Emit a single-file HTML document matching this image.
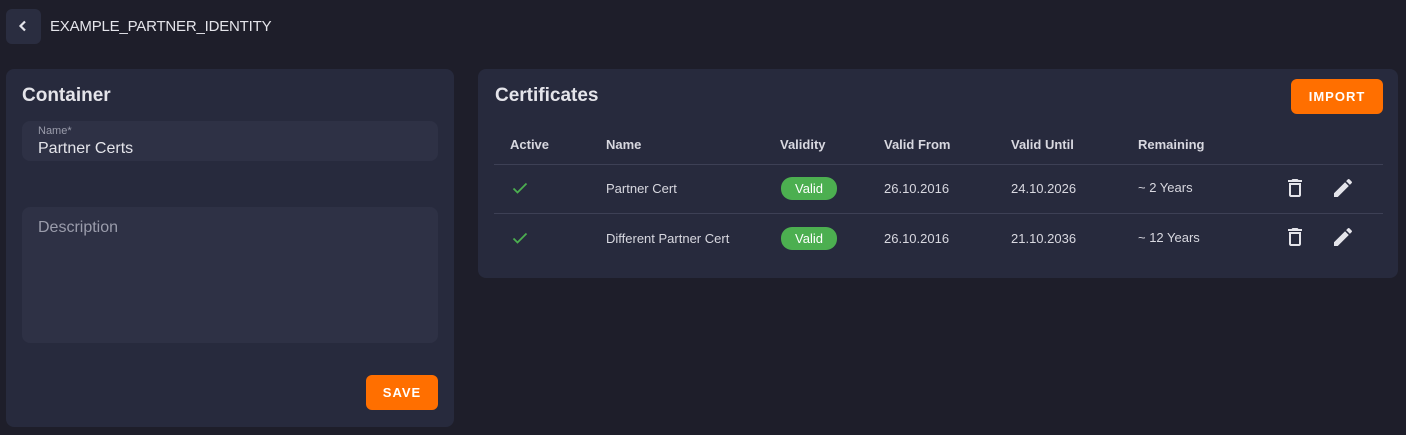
<!DOCTYPE html>
<html><head><style>
*{box-sizing:border-box;margin:0;padding:0}
body{width:1406px;height:435px;background:#1e1e2a;font-family:"Liberation Sans",sans-serif;color:#e4e4ea;position:relative;overflow:hidden}
.abs{position:absolute}
.card{background:#272a3d;border-radius:8px}
.btn{background:#ff6f00;color:#fff;font-weight:bold;font-size:13px;letter-spacing:1px;border-radius:6px;display:flex;align-items:center;justify-content:center}
.th{font-size:13px;font-weight:bold;color:#d8d8e0;top:137px}
.td{font-size:13px;color:#d8d8e0}
.badge{background:#4caf50;color:#fff;font-size:13px;border-radius:11px;width:56px;height:23px;display:flex;align-items:center;justify-content:center}
.line{height:1px;background:#3d4055;left:494px;width:889px}
</style></head><body>
<div class="abs" style="left:6px;top:9px;width:35px;height:35px;background:#2a2d40;border-radius:6px"></div>
<svg class="abs" style="left:16px;top:19px" width="14" height="14" viewBox="0 0 14 14"><path d="M9 2.5L4.5 7L9 11.5" stroke="#e4e4ea" stroke-width="2.2" fill="none"/></svg>
<div class="abs" style="left:50px;top:18px;font-size:15px;letter-spacing:-0.2px">EXAMPLE_PARTNER_IDENTITY</div>

<div class="abs card" style="left:6px;top:69px;width:448px;height:358px"></div>
<div class="abs" style="left:22px;top:85px;font-size:19px;font-weight:bold">Container</div>
<div class="abs" style="left:22px;top:121px;width:416px;height:40px;background:#2e3145;border-radius:8px"></div>
<div class="abs" style="left:38px;top:125px;font-size:11px;color:#9a9cab">Name*</div>
<div class="abs" style="left:38px;top:140px;font-size:16px">Partner Certs</div>
<div class="abs" style="left:22px;top:207px;width:416px;height:136px;background:#2e3145;border-radius:8px"></div>
<div class="abs" style="left:38px;top:219px;font-size:16px;color:#9a9cab">Description</div>
<div class="abs btn" style="left:366px;top:375px;width:72px;height:35px">SAVE</div>

<div class="abs card" style="left:478px;top:69px;width:920px;height:209px"></div>
<div class="abs" style="left:495px;top:85px;font-size:19px;font-weight:bold">Certificates</div>
<div class="abs btn" style="left:1291px;top:79px;width:92px;height:35px">IMPORT</div>
<div class="abs th" style="left:510px">Active</div>
<div class="abs th" style="left:606px">Name</div>
<div class="abs th" style="left:780px">Validity</div>
<div class="abs th" style="left:884px">Valid From</div>
<div class="abs th" style="left:1011px">Valid Until</div>
<div class="abs th" style="left:1138px">Remaining</div>
<div class="abs line" style="top:164px"></div>
<div class="abs line" style="top:213px"></div>

<svg class="abs" style="left:512px;top:181px" width="16" height="14"><path d="M1.5 7.5L5.5 11.5L14.5 2.5" stroke="#4caf50" stroke-width="1.8" fill="none"/></svg>
<div class="abs td" style="left:606px;top:181px">Partner Cert</div>
<div class="abs badge" style="left:781px;top:177px">Valid</div>
<div class="abs td" style="left:884px;top:181px">26.10.2016</div>
<div class="abs td" style="left:1011px;top:181px">24.10.2026</div>
<div class="abs td" style="left:1138px;top:180px">~ 2 Years</div>

<svg class="abs" style="left:1531px;top:231px" width="1" height="1"></svg>
<svg class="abs" style="left:512px;top:231px" width="16" height="14"><path d="M1.5 7.5L5.5 11.5L14.5 2.5" stroke="#4caf50" stroke-width="1.8" fill="none"/></svg>
<div class="abs td" style="left:606px;top:231px">Different Partner Cert</div>
<div class="abs badge" style="left:781px;top:227px">Valid</div>
<div class="abs td" style="left:884px;top:231px">26.10.2016</div>
<div class="abs td" style="left:1011px;top:231px">21.10.2036</div>
<div class="abs td" style="left:1138px;top:230px">~ 12 Years</div>

<svg class="abs" style="left:1283px;top:176px" width="24" height="24" viewBox="0 0 24 24"><path fill="#e4e4ea" d="M6 19c0 1.1.9 2 2 2h8c1.1 0 2-.9 2-2V7H6v12zM8 9h8v10H8V9zm7.5-5l-1-1h-5l-1 1H5v2h14V4z"/></svg>
<svg class="abs" style="left:1331px;top:176px" width="24" height="24" viewBox="0 0 24 24"><path fill="#e4e4ea" d="M3 17.25V21h3.75L17.81 9.94l-3.75-3.75L3 17.25zM20.71 7.04a1 1 0 000-1.41l-2.34-2.34a1 1 0 00-1.41 0l-1.83 1.83 3.75 3.75 1.83-1.83z"/></svg>
<svg class="abs" style="left:1283px;top:225px" width="24" height="24" viewBox="0 0 24 24"><path fill="#e4e4ea" d="M6 19c0 1.1.9 2 2 2h8c1.1 0 2-.9 2-2V7H6v12zM8 9h8v10H8V9zm7.5-5l-1-1h-5l-1 1H5v2h14V4z"/></svg>
<svg class="abs" style="left:1331px;top:225px" width="24" height="24" viewBox="0 0 24 24"><path fill="#e4e4ea" d="M3 17.25V21h3.75L17.81 9.94l-3.75-3.75L3 17.25zM20.71 7.04a1 1 0 000-1.41l-2.34-2.34a1 1 0 00-1.41 0l-1.83 1.83 3.75 3.75 1.83-1.83z"/></svg>
</body></html>
